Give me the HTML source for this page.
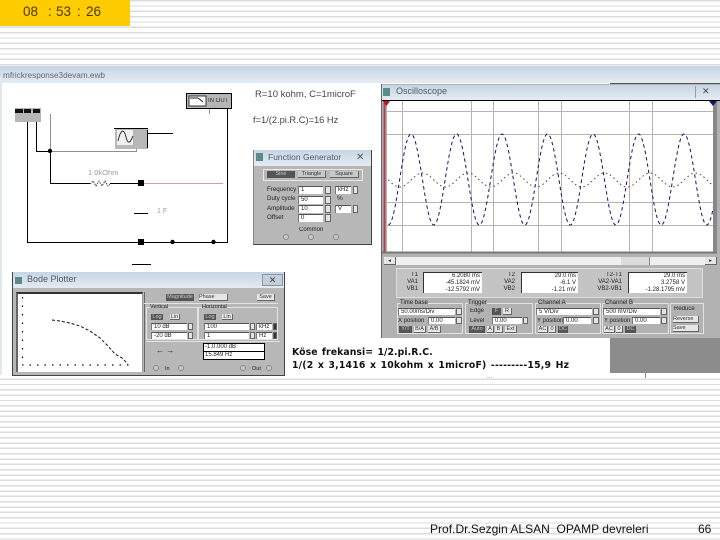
<!DOCTYPE html>
<html><head><meta charset="utf-8"><style>
html,body{margin:0;padding:0}
body{width:720px;height:540px;overflow:hidden;position:relative;background:#fff repeating-linear-gradient(to bottom,#dcdcdc 0,#dcdcdc 1.4px,#fff 1.4px,#fff 5.33px);font-family:"Liberation Sans",sans-serif}
div,span{position:absolute;box-sizing:border-box}
.t{font-size:6.5px;line-height:8px;white-space:nowrap;color:#222;filter:blur(.3px)}
.w{background:#fff;border-top:1px solid #555;border-left:1px solid #777;font-size:6px;line-height:7px;white-space:nowrap;color:#222;padding-left:2px;overflow:hidden;filter:blur(.2px)}
.s{background:#e4e4e4;border:1px solid #666}
.d{background:#555;color:#ccc;font-size:5.5px;line-height:6px;text-align:center;white-space:nowrap;overflow:hidden;filter:blur(.2px)}
.b{background:#e6e6e6;border-right:1px solid #666;border-bottom:1px solid #666;color:#333;font-size:5.5px;line-height:6px;text-align:center;white-space:nowrap;overflow:hidden;filter:blur(.2px)}
.g{border:1px solid #e2e2e2}
.c{width:6px;height:6px;border-radius:50%;border:1px solid #888;background:#c8c8c8}
.bar{background:linear-gradient(to bottom,#c6d5e4,#e4ebf2)}
.x{background:#c4cfda;border:1px solid #8a96a2;color:#444;font-size:9px;line-height:10px;text-align:center}
.k{background:#000}
.clk{top:4px;font-size:13.5px;line-height:16px;color:#4a3808;white-space:pre}
</style></head><body>

<div style="left:0;top:0;width:130px;height:26px;background:#ffcc00"></div>
<div class="clk" style="left:23px">08</div>
<div class="clk" style="left:48px">:</div>
<div class="clk" style="left:56px">53</div>
<div class="clk" style="left:77px">:</div>
<div class="clk" style="left:86px">26</div>

<div class="bar" style="left:0;top:66px;width:720px;height:17px"></div>
<div class="t" style="left:3px;top:71px;font-size:8.200px;line-height:10px;color:#667;">mfrickresponse3devam.ewb</div>
<div style="left:0;top:83px;width:720px;height:292px;background:#fff"></div>
<div style="left:0;top:83px;width:2px;height:292px;background:#dfeaf0"></div>

<!-- circuit -->
<svg style="position:absolute;left:0;top:0" width="380" height="375" viewBox="0 0 380 375" fill="none" shape-rendering="crispEdges">
<g stroke="#000">
<path d="M27.5 122V242.5H227.5V108M36.5 122V151.5H50.5M50.5 151.5V183.5H90M110 183.5H141M148 133.5H173M134 213.5H148M132 264.5H151"/>
</g>
<path d="M50.5 114V151.5H136.5V142" stroke="#8f8aa8"/>
<path d="M141 183.5H223" stroke="#d79a9e"/>
<path d="M209.5 108V114" stroke="#999"/>
<path d="M90 184L93 181L96 186L99 181L102 186L105 181L108 186L110 184" stroke="#444" stroke-dasharray="1.5 1" shape-rendering="auto"/>
<rect x="15" y="108" width="26" height="14" fill="#b5b5b5"/>
<rect x="15" y="109" width="8" height="4" fill="#111"/><rect x="24" y="109" width="7" height="4" fill="#111"/><rect x="33" y="109" width="7" height="4" fill="#111"/>
<rect x="115" y="128" width="33" height="21" fill="#b8b8b8"/>
<path d="M114 128.5H148" stroke="#000"/>
<rect x="117" y="130" width="16" height="15" fill="#f0f0f0"/>
<path d="M118 141C121 128 124 129 126 137C128 145 130 143 133 136" stroke="#333" shape-rendering="auto"/>
<path d="M147.500 130V148" stroke="#000"/>
<rect x="186.500" y="93.500" width="45" height="15" fill="#b5b5b5" stroke="#000"/>
<rect x="189" y="96" width="17" height="10" fill="#fff" stroke="#333"/>
<path d="M190 98H198L203 102" stroke="#222" shape-rendering="auto"/>
<rect x="138" y="180" width="6" height="6" fill="#000"/>
<rect x="138" y="239" width="6" height="6" fill="#000"/>
<g shape-rendering="auto" fill="#000"><circle cx="50" cy="151" r="2.200"/><circle cx="172.500" cy="242" r="2.200"/><circle cx="213.500" cy="242" r="2.200"/></g>
</svg>
<div class="t" style="left:88px;top:169px;color:#99a;font-size:7.500px">1 0kOhm</div>
<div class="t" style="left:157px;top:208px;color:#99a;font-size:7px">1 F</div>
<div class="t" style="left:208px;top:97px;color:#334;font-size:6px">IN  OUT</div>
<div class="t" style="left:255px;top:90px;font-size:9.500px;line-height:10px;color:#444">R=10 kohm,  C=1microF</div>
<div class="t" style="left:253px;top:115px;font-size:9.300px;line-height:10px;color:#444">f=1/(2.pi.R.C)=16 Hz</div>

<!-- Function generator -->
<div style="left:253px;top:150px;width:119px;height:95px;background:#b7b7b7;border-right:1px solid #444;border-bottom:1px solid #444;border-left:1px solid #888"></div>
<div class="bar" style="left:254px;top:150px;width:117px;height:16px"></div>
<div style="left:256px;top:153px;width:7px;height:8px;background:#5b8a8a"></div>
<div class="t" style="left:268px;top:152px;font-size:8.500px;line-height:11px;color:#4c5c6c">Function Generator</div>
<div class="t" style="left:356px;top:152px;font-size:10px;line-height:11px;color:#556">&#10005;</div>
<div style="left:263px;top:169px;width:100px;height:12px;border:1px solid #e8e8e8"></div>
<div class="d" style="left:267px;top:171px;width:28px;height:7px">Sine</div>
<div class="b" style="left:298px;top:171px;width:28px;height:7px;background:#c8c8c8">Triangle</div>
<div class="b" style="left:330px;top:171px;width:29px;height:7px;background:#c8c8c8">Square</div>
<div class="t" style="left:267px;top:186px;font-size:6.200px">Frequency</div>
<div class="t" style="left:267px;top:195px;font-size:6.200px">Duty cycle</div>
<div class="t" style="left:267px;top:205px;font-size:6.200px">Amplitude</div>
<div class="t" style="left:267px;top:214px;font-size:6.200px">Offset</div>
<div class="w" style="left:298px;top:186px;width:25px;height:8px">1</div><div class="s" style="left:325px;top:186px;width:6px;height:8px"></div>
<div class="w" style="left:335px;top:186px;width:16px;height:8px">kHz</div><div class="s" style="left:353px;top:186px;width:5px;height:8px"></div>
<div class="w" style="left:298px;top:196px;width:25px;height:8px">50</div><div class="s" style="left:325px;top:196px;width:6px;height:8px"></div>
<div class="t" style="left:337px;top:195px">%</div>
<div class="w" style="left:298px;top:205px;width:25px;height:8px">10</div><div class="s" style="left:325px;top:205px;width:6px;height:8px"></div>
<div class="w" style="left:335px;top:205px;width:16px;height:8px">V</div><div class="s" style="left:353px;top:205px;width:5px;height:8px"></div>
<div class="w" style="left:298px;top:214px;width:25px;height:8px">0</div><div class="s" style="left:325px;top:214px;width:6px;height:8px"></div>
<div class="t" style="left:299px;top:226px;font-size:6px">Common</div>
<div class="c" style="left:283px;top:234px"></div><div class="c" style="left:308px;top:234px"></div><div class="c" style="left:333px;top:234px"></div>

<!-- Bode -->
<div style="left:12px;top:272px;width:273px;height:104px;background:#b7b7b7;border:1px solid #444;border-top:0"></div>
<div class="bar" style="left:13px;top:272px;width:271px;height:16px"></div>
<div style="left:15px;top:277px;width:7px;height:7px;background:#5b8a8a"></div>
<div class="t" style="left:27px;top:274px;font-size:9px;line-height:11px;color:#4c5c6c">Bode Plotter</div>
<div class="x" style="left:262px;top:274px;width:21px;height:12px">&#10005;</div>
<div style="left:16px;top:292px;width:127px;height:80px;background:#fff;border-top:2px solid #333;border-left:2px solid #666;border-right:1px solid #999"></div>
<svg style="position:absolute;left:16px;top:292px" width="127" height="80" viewBox="16 292 127 80" fill="none">
<path d="M22.500 297V363" stroke="#111" stroke-width="1.200" stroke-dasharray="1.500 7"/>
<path d="M22 365H134" stroke="#111" stroke-width="1.200" stroke-dasharray="1.500 6"/>
<path d="M52 320L60 321L70 323L80 326L90 331L100 338L108 346L115 354L122 358L128 364" stroke="#111" stroke-dasharray="3 2"/>
</svg>
<div style="left:144px;top:292px;width:1px;height:80px;background:#666"></div>
<div class="d" style="left:166px;top:294px;width:28px;height:7px">Magnitude</div>
<div class="b" style="left:199px;top:294px;width:29px;height:7px;text-align:left">Phase</div>
<div class="b" style="left:257px;top:294px;width:18px;height:7px">Save</div>
<div class="g" style="left:146px;top:307px;width:52px;height:33px"></div>
<div class="g" style="left:198px;top:307px;width:80px;height:33px"></div>
<div class="t" style="left:150px;top:303px;background:#b7b7b7;font-size:5.500px">Vertical</div>
<div class="t" style="left:202px;top:303px;background:#b7b7b7;font-size:5.500px">Horizontal</div>
<div class="d" style="left:151px;top:314px;width:12px;height:6px">Log</div><div class="b" style="left:170px;top:314px;width:10px;height:6px">Lin</div>
<div class="d" style="left:204px;top:314px;width:12px;height:6px">Log</div><div class="b" style="left:222px;top:314px;width:11px;height:6px">Lin</div>
<div class="w" style="left:151px;top:323px;width:36px;height:7px">10 dB</div><div class="s" style="left:188px;top:323px;width:5px;height:7px"></div>
<div class="w" style="left:151px;top:332px;width:36px;height:7px">-20 dB</div><div class="s" style="left:188px;top:332px;width:5px;height:7px"></div>
<div class="w" style="left:204px;top:323px;width:45px;height:7px">100</div><div class="s" style="left:250px;top:323px;width:5px;height:7px"></div>
<div class="w" style="left:204px;top:332px;width:45px;height:7px">1</div><div class="s" style="left:250px;top:332px;width:5px;height:7px"></div>
<div class="w" style="left:256px;top:323px;width:16px;height:7px">kHz</div><div class="s" style="left:273px;top:323px;width:4px;height:7px;background:#333"></div>
<div class="w" style="left:256px;top:332px;width:16px;height:7px">Hz</div><div class="s" style="left:273px;top:332px;width:4px;height:7px;background:#333"></div>
<div class="t" style="left:156px;top:347px;font-size:8px;color:#222">&#8592; &#8594;</div>
<div style="left:203px;top:343px;width:62px;height:17px;background:#fff;border:1px solid #000"></div>
<div class="k" style="left:203px;top:351px;width:62px;height:1px"></div>
<div class="t" style="left:205px;top:344px;font-size:6px;line-height:7px">-1.0.000 dB</div>
<div class="t" style="left:205px;top:352px;font-size:6px;line-height:7px">15.849 Hz</div>
<div class="c" style="left:153px;top:365px"></div><div class="t" style="left:165px;top:365px;font-size:5.500px">In</div><div class="c" style="left:178px;top:365px"></div>
<div class="c" style="left:240px;top:365px"></div><div class="t" style="left:252px;top:365px;font-size:5.500px">Out</div><div class="c" style="left:266px;top:365px"></div>
<div style="left:144px;top:303px;width:134px;height:1px;background:#e2e2e2"></div>
<div style="left:146px;top:341px;width:134px;height:1px;background:#e2e2e2"></div>

<!-- text block -->
<div style="left:292px;top:347px;font:bold 9.300px/11px 'DejaVu Sans',sans-serif;color:#111;white-space:nowrap;letter-spacing:.08px;word-spacing:1px">Köse frekansi= 1/2.pi.R.C.</div>
<div style="left:292px;top:360px;font:bold 9.300px/11px 'DejaVu Sans',sans-serif;color:#111;white-space:nowrap;letter-spacing:.2px;word-spacing:1px">1/(2 x 3,1416 x 10kohm x 1microF) ---------15,9 Hz</div>
<div style="left:610px;top:338px;width:110px;height:35px;background:#8c8c8c"></div>
<div class="t" style="left:487px;top:373px;font-size:6px;color:#777">...</div>
<div style="left:645px;top:373px;width:1px;height:5px;background:#888"></div>

<!-- Oscilloscope -->
<div style="left:381px;top:84px;width:339px;height:254px;background:#b2b2b2;border-left:1px solid #666"></div>
<div class="bar" style="left:382px;top:85px;width:338px;height:15px"></div>
<div style="left:610px;top:83px;width:110px;height:1px;background:#555"></div>
<div style="left:383px;top:88px;width:7px;height:8px;background:#5b8a8a"></div>
<div class="t" style="left:396px;top:86px;font-size:9px;line-height:11px;color:#4c5c6c">Oscilloscope</div>
<div style="left:695px;top:86px;width:1px;height:12px;background:#99a"></div>
<div class="t" style="left:702px;top:86px;font-size:9px;line-height:11px;color:#445">&#10005;</div>
<div class="k" style="left:382px;top:100px;width:338px;height:1px"></div>
<div style="left:387px;top:101px;width:326px;height:151px;background:#fff"></div>
<svg style="position:absolute;left:382px;top:100px" width="338" height="156" viewBox="382 100 338 156" fill="none">
<defs><clipPath id="p"><rect x="387" y="101" width="326" height="151"/></clipPath></defs>
<g stroke="#b4b4b4">
<path d="M387 111.500H713M387 134.500H713M387 202.500H713M387 225.500H713M402.500 101V252M471.500 101V252M493.500 101V252M538.500 101V252M561.500 101V252M629.500 101V252M652.500 101V252"/>
</g>
<path d="M384.500 101V252" stroke="#b04050" stroke-width="2"/>
<path d="M382 252.500H717" stroke="#777" stroke-width="2"/>
<path d="M715 101V252" stroke="#888" stroke-width="4"/>
<g clip-path="url(#p)">
<path d="M388.300 225c8.300 0 14.450 -91 22.750 -91s14.450 91 22.750 91s14.450 -91 22.750 -91s14.450 91 22.750 91s14.450 -91 22.750 -91s14.450 91 22.750 91s14.450 -91 22.750 -91s14.450 91 22.750 91s14.450 -91 22.750 -91s14.450 91 22.750 91s14.450 -91 22.750 -91s14.450 91 22.750 91s14.450 -91 22.750 -91s14.450 91 22.750 91s14.450 -91 22.750 -91" stroke="#14146e" stroke-width="1" stroke-dasharray="3.500 3"/>
<path d="M377 173c8.300 0 14.450 14 22.750 14s14.450 -14 22.750 -14s14.450 14 22.750 14s14.450 -14 22.750 -14s14.450 14 22.750 14s14.450 -14 22.750 -14s14.450 14 22.750 14s14.450 -14 22.750 -14s14.450 14 22.750 14s14.450 -14 22.750 -14s14.450 14 22.750 14s14.450 -14 22.750 -14s14.450 14 22.750 14s14.450 -14 22.750 -14s14.450 14 22.750 14" stroke="#8a2a3a" stroke-width="1" stroke-dasharray="1.500 3"/>
</g>
<path d="M383 101H390L386.500 106Z" fill="#b01828"/>
<path d="M709 101H717L713 106Z" fill="#14146e"/>
</svg>

<!-- scrollbar -->
<div style="left:384px;top:257px;width:333px;height:8px;background:#efefef"></div>
<div class="b" style="left:384px;top:257px;width:12px;height:8px;line-height:8px">&#9666;</div>
<div class="b" style="left:705px;top:257px;width:12px;height:8px;line-height:8px">&#9656;</div>
<div style="left:621px;top:257px;width:29px;height:8px;background:#dcdcdc;border-right:1px solid #888"></div>

<!-- readouts -->
<div style="left:396px;top:268px;width:307px;height:30px;background:#c4c4c4;border:1px solid #dedede"></div>
<div style="left:423px;top:272px;width:59px;height:21px;background:#fff;border-left:1px solid #333;border-top:1px solid #333"></div>
<div style="left:521px;top:272px;width:57px;height:21px;background:#fff;border-left:1px solid #333;border-top:1px solid #333"></div>
<div style="left:628px;top:272px;width:59px;height:21px;background:#fff;border-left:1px solid #333;border-top:1px solid #333"></div>
<div class="t" style="left:395px;top:272px;width:23px;text-align:right;line-height:7px;font-size:6px">T1<br>VA1<br>VB1</div>
<div class="t" style="left:425px;top:273px;width:55px;text-align:right;line-height:7px;font-size:6px">6.2080 ms<br>-45.1824 mV<br>-12.5792 mV</div>
<div class="t" style="left:492px;top:272px;width:23px;text-align:right;line-height:7px;font-size:6px">T2<br>VA2<br>VB2</div>
<div class="t" style="left:523px;top:273px;width:53px;text-align:right;line-height:7px;font-size:6px">29.0 ms<br>-6.1 V<br>-1.21 mV</div>
<div class="t" style="left:590px;top:272px;width:32px;text-align:right;line-height:7px;font-size:6px">T2-T1<br>VA2-VA1<br>VB2-VB1</div>
<div class="t" style="left:630px;top:273px;width:55px;text-align:right;line-height:7px;font-size:6px">29.0 ms<br>3.2758 V<br>-1.28.1795 mV</div>

<!-- controls -->
<div class="g" style="left:397px;top:303px;width:66px;height:31px"></div>
<div class="g" style="left:465px;top:303px;width:68px;height:31px"></div>
<div class="g" style="left:535px;top:303px;width:66px;height:31px"></div>
<div class="g" style="left:602px;top:303px;width:67px;height:31px"></div>
<div class="g" style="left:670px;top:303px;width:34px;height:31px"></div>
<div class="t" style="left:400px;top:299px;background:#b2b2b2;font-size:6px">Time base</div>
<div class="t" style="left:468px;top:299px;background:#b2b2b2;font-size:6px">Trigger</div>
<div class="t" style="left:538px;top:299px;background:#b2b2b2;font-size:6px">Channel A</div>
<div class="t" style="left:605px;top:299px;background:#b2b2b2;font-size:6px">Channel B</div>
<div class="w" style="left:398px;top:308px;width:57px;height:7px">50.00ms/Div</div><div class="s" style="left:456px;top:308px;width:6px;height:7px"></div>
<div class="t" style="left:398px;top:317px;font-size:6px">X position</div>
<div class="w" style="left:428px;top:317px;width:27px;height:7px">0.00</div><div class="s" style="left:456px;top:317px;width:6px;height:7px"></div>
<div class="d" style="left:399px;top:326px;width:13px;height:7px">Y/T</div><div class="b" style="left:414px;top:326px;width:12px;height:7px">B/A</div><div class="b" style="left:428px;top:326px;width:13px;height:7px">A/B</div>
<div class="t" style="left:470px;top:307px;font-size:6px">Edge</div>
<div class="d" style="left:492px;top:308px;width:9px;height:7px">F</div><div class="b" style="left:503px;top:308px;width:9px;height:7px">R</div>
<div class="t" style="left:470px;top:317px;font-size:6px">Level</div>
<div class="w" style="left:492px;top:317px;width:30px;height:7px">0.00</div><div class="s" style="left:523px;top:317px;width:5px;height:7px"></div>
<div class="d" style="left:469px;top:326px;width:16px;height:7px">Auto</div><div class="b" style="left:487px;top:326px;width:7px;height:7px">A</div><div class="b" style="left:495px;top:326px;width:8px;height:7px">B</div><div class="b" style="left:505px;top:326px;width:12px;height:7px">Ext</div>
<div class="w" style="left:536px;top:308px;width:56px;height:7px">5 V/Div</div><div class="s" style="left:593px;top:308px;width:6px;height:7px"></div>
<div class="t" style="left:537px;top:317px;font-size:6px">Y position</div>
<div class="w" style="left:563px;top:317px;width:28px;height:7px">0.00</div><div class="s" style="left:593px;top:317px;width:6px;height:7px"></div>
<div class="b" style="left:538px;top:326px;width:10px;height:7px">AC</div><div class="b" style="left:549px;top:326px;width:7px;height:7px">0</div><div class="d" style="left:558px;top:326px;width:10px;height:7px">DC</div>
<div class="w" style="left:603px;top:308px;width:57px;height:7px">500 mV/Div</div><div class="s" style="left:661px;top:308px;width:6px;height:7px"></div>
<div class="t" style="left:604px;top:317px;font-size:6px">Y position</div>
<div class="w" style="left:632px;top:317px;width:28px;height:7px">0.00</div><div class="s" style="left:661px;top:317px;width:6px;height:7px"></div>
<div class="b" style="left:604px;top:326px;width:11px;height:7px">AC</div><div class="b" style="left:616px;top:326px;width:7px;height:7px">0</div><div class="d" style="left:625px;top:326px;width:11px;height:7px">DC</div>
<div class="t" style="left:674px;top:305px;font-size:6px">Reduce</div>
<div class="b" style="left:673px;top:316px;width:26px;height:7px;text-align:left">Reverse</div>
<div class="b" style="left:673px;top:325px;width:26px;height:7px;text-align:left">Save</div>

<!-- footer -->
<div style="left:430px;top:522px;font-size:12.050px;line-height:14px;color:#111;white-space:pre">Prof.Dr.Sezgin ALSAN  OPAMP devreleri</div>
<div style="left:698px;top:522px;font-size:12px;line-height:14px;color:#111">66</div>
</body></html>
